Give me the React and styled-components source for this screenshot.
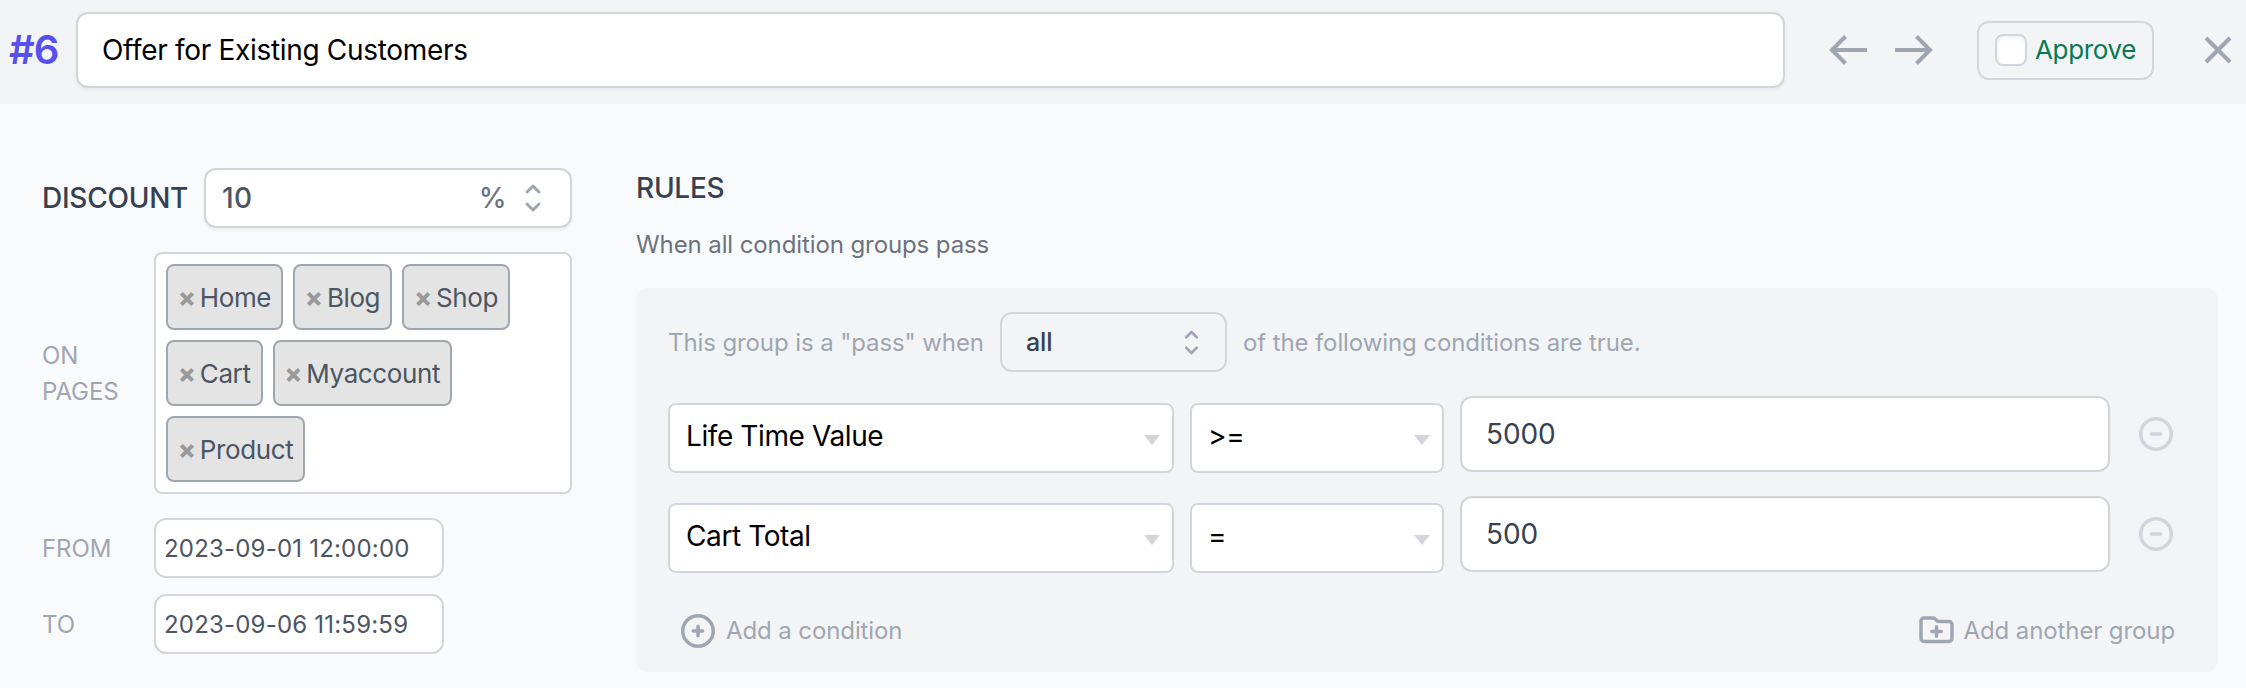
import React from 'react'
import styled, { createGlobalStyle } from 'styled-components'

const GlobalStyle = createGlobalStyle`
    * {
        box-sizing: border-box;
    }
    body {
        margin: 0;
        background-color: #f9fafc;
        font-family: Inter, "Liberation Sans", sans-serif;
        font-size: 24px;
        line-height: 36px;
        letter-spacing: -0.1px;
        color: #374151;
    }
    svg {
        display: block;
        flex: none;
    }
`

const Page = styled.div`
    height: 688px;
    overflow: hidden;
`

const Header = styled.div`
    display: flex;
    align-items: center;
    height: 104px;
    padding: 0 14px 4px 9px;
    background-color: #f3f4f6;
`

const OfferId = styled.div`
    width: 67px;
    font-size: 40px;
    font-weight: 600;
    letter-spacing: -1px;
    color: #5850ec;
`

const Title = styled.div`
    display: flex;
    align-items: center;
    width: 1709px;
    height: 76px;
    padding: 0 24px;
    border: 2px solid #d2d6dc;
    border-radius: 12px;
    background-color: #fff;
    box-shadow: 0 2px 4px rgba(0, 0, 0, 0.05);
    font-size: 28px;
    letter-spacing: -0.32px;
    color: #000;
`

const Arrows = styled.div`
    display: flex;
    gap: 26px;
    margin-left: 43px;
    color: #9fa6b2;
`

const Approve = styled.label`
    display: flex;
    align-items: center;
    width: 177px;
    height: 59px;
    margin: 0 auto 0 43px;
    padding-left: 16px;
    border: 2px solid #d2d6dc;
    border-radius: 12px;
    font-size: 26px;
    letter-spacing: -0.35px;
    color: #057a55;
`

const Checkbox = styled.span`
    width: 32px;
    height: 32px;
    margin-right: 8px;
    border: 2px solid #d2d6dc;
    border-radius: 8px;
    background-color: #fff;
    box-shadow: inset 0 2px 4px rgba(0, 0, 0, 0.06);
`

const Close = styled.div`
    color: #9fa6b2;
`

const Body = styled.div`
    display: flex;
    align-items: flex-start;
    padding: 64px 28px 0 42px;
`

const Sidebar = styled.div`
    width: 530px;
    margin-right: 64px;
`

const Discount = styled.div`
    display: flex;
    align-items: center;
    justify-content: space-between;
    margin-bottom: 24px;
`

const Heading = styled.div`
    font-size: 28px;
    font-weight: 500;
    letter-spacing: -0.25px;
    color: #374151;
`

const Amount = styled.div`
    display: flex;
    align-items: center;
    width: 368px;
    height: 60px;
    padding: 0 17px 0 16px;
    border: 2px solid #d2d6dc;
    border-radius: 12px;
    background-color: #fff;
    box-shadow: 0 2px 4px rgba(0, 0, 0, 0.05);
    font-size: 28px;
    font-weight: 500;
    letter-spacing: 0.5px;
    color: #4b5563;
    svg {
        color: #9fa6b2;
    }
`

const Unit = styled.span`
    margin: 0 6px 0 auto;
    font-size: 28px;
    color: #6b7280;
`

const Field = styled.div`
    display: flex;
    align-items: center;
    margin-bottom: ${props => props.$gap || 16}px;
`

const Label = styled.div`
    width: 112px;
    padding: 2px 20px 0 0;
    color: #9fa6b2;
`

const TagBox = styled.div`
    display: flex;
    flex-wrap: wrap;
    align-content: flex-start;
    gap: 10px;
    width: 418px;
    height: 242px;
    padding: 10px;
    border: 2px solid #d2d6dc;
    border-radius: 8px;
    background-color: #fff;
`

const Tag = styled.div`
    display: flex;
    align-items: center;
    height: 66px;
    padding: 2px 10px 0;
    border: 2px solid #9fa6b2;
    border-radius: 8px;
    background-color: #e4e4e4;
    font-size: 26px;
    letter-spacing: -0.4px;
    color: #4b5563;
`

const Remove = styled.span`
    margin-right: 4px;
    font-weight: 800;
    letter-spacing: 0;
    color: #999;
`

const DateInput = styled.div`
    display: flex;
    align-items: center;
    width: 290px;
    height: 60px;
    padding: 2px 0 0 8px;
    border: 2px solid #d2d6dc;
    border-radius: 12px;
    background-color: #fff;
    letter-spacing: 0.2px;
    color: #4b5563;
`

const Rules = styled.div`
    flex: 1;
    padding-top: 2px;
`

const Hint = styled.div`
    margin: 21px 0 25px;
    color: #6b7280;
`

const Group = styled.div`
    height: 384px;
    padding: 24px 43px 0 32px;
    border-radius: 12px;
    background-color: #f3f4f6;
    color: #9fa6b2;
`

const GroupHead = styled.div`
    display: flex;
    align-items: center;
    margin-bottom: 24px;
`

const Phrase = styled.span`
    padding-top: 2px;
`

const MatchSelect = styled.div`
    display: flex;
    align-items: center;
    justify-content: space-between;
    width: 227px;
    height: 60px;
    margin: 0 16px;
    padding: 0 16px 0 24px;
    border: 2px solid #d2d6dc;
    border-radius: 12px;
    font-size: 25px;
    font-weight: 500;
    color: #374151;
    svg {
        color: #9fa6b2;
    }
`

const Condition = styled.div`
    display: flex;
    align-items: flex-start;
    gap: 16px;
    height: 76px;
    margin-bottom: 24px;
`

const Select = styled.div`
    display: flex;
    align-items: center;
    justify-content: space-between;
    width: ${props => props.$width}px;
    height: 70px;
    margin-top: 7px;
    padding: 0 12px 4px 16px;
    border: 2px solid #d2d6dc;
    border-radius: 8px;
    background-color: #fff;
    font-size: 28px;
    letter-spacing: -0.4px;
    color: #000;
`

const Caret = styled.i`
    margin-top: 8px;
    border: 8px solid transparent;
    border-top: 10px solid #d2d6dc;
    border-bottom: 0;
`

const Value = styled.div`
    display: flex;
    align-items: center;
    width: 650px;
    height: 76px;
    padding-left: 24px;
    border: 2px solid #d2d6dc;
    border-radius: 12px;
    background-color: #fff;
    font-size: 28px;
    color: #374151;
`

const Minus = styled.div`
    align-self: center;
    margin-left: 12px;
    color: #d2d6dc;
`

const Actions = styled.div`
    display: flex;
    justify-content: space-between;
    padding: 16px 0 0 12px;
`

const Action = styled.div`
    display: flex;
    align-items: center;
    gap: 10px;
`

const ArrowIcon = ({ flip }) => (
    <svg width="40" height="40" viewBox="0 0 40 40" fill="none" stroke="currentColor" strokeWidth="4" transform={flip ? 'scale(-1 1)' : undefined}>
        <path d="M39 20H4M17.5 6.5L4 20L17.5 33.5" />
    </svg>
)

const Selector = ({ size }) => (
    <svg width={size} height={size} viewBox="0 0 20 20" fill="none" stroke="currentColor" strokeWidth="1.5" strokeLinecap="round" strokeLinejoin="round">
        <path d="M7 7l3-3 3 3m0 6l-3 3-3-3" />
    </svg>
)

const CircleIcon = ({ plus }) => (
    <svg width="36" height="36" viewBox="0 0 36 36" fill="none" stroke="currentColor" strokeWidth="3.5" strokeLinecap="round">
        <circle cx="18" cy="18" r="15.25" />
        <path d={plus ? 'M13.25 18h9.5M18 13.25v9.5' : 'M13.25 18h9.5'} />
    </svg>
)

const FolderIcon = () => (
    <svg width="36" height="38" viewBox="1 0 36 38" fill="none" stroke="currentColor" strokeWidth="3.5" strokeLinecap="round" strokeLinejoin="round">
        <path d="M4 9a3 3 0 0 1 3-3h10l4 3.500h11a3 3 0 0 1 3 3v14a3 3 0 0 1-3 3H7a3 3 0 0 1-3-3z" />
        <path d="M14.750 19.500h9.500M19.500 14.750v9.500" />
    </svg>
)

const pages = ['Home', 'Blog', 'Shop', 'Cart', 'Myaccount', 'Product']

const conditions = [
    { field: 'Life Time Value', operator: '>=', value: '5000' },
    { field: 'Cart Total', operator: '=', value: '500' },
]

const App = () => {
    return (
        <Page>
            <GlobalStyle />
            <Header>
                <OfferId>#6</OfferId>
                <Title>Offer for Existing Customers</Title>
                <Arrows>
                    <ArrowIcon />
                    <ArrowIcon flip />
                </Arrows>
                <Approve><Checkbox />Approve</Approve>
                <Close>
                    <svg width="28" height="28" viewBox="0 0 28 28" fill="none" stroke="currentColor" strokeWidth="4">
                        <path d="M2 2l24 24M26 2L2 26" />
                    </svg>
                </Close>
            </Header>
            <Body>
                <Sidebar>
                    <Discount>
                        <Heading>DISCOUNT</Heading>
                        <Amount>10<Unit>%</Unit><Selector size={40} /></Amount>
                    </Discount>
                    <Field $gap={24}>
                        <Label>ON PAGES</Label>
                        <TagBox>
                            {pages.map(page => (
                                <Tag key={page}><Remove>×</Remove>{page}</Tag>
                            ))}
                        </TagBox>
                    </Field>
                    <Field>
                        <Label>FROM</Label>
                        <DateInput>2023-09-01 12:00:00</DateInput>
                    </Field>
                    <Field>
                        <Label>TO</Label>
                        <DateInput>2023-09-06 11:59:59</DateInput>
                    </Field>
                </Sidebar>
                <Rules>
                    <Heading>RULES</Heading>
                    <Hint>When all condition groups pass</Hint>
                    <Group>
                        <GroupHead>
                            <Phrase>This group is a "pass" when</Phrase>
                            <MatchSelect>all<Selector size={35} /></MatchSelect>
                            <Phrase>of the following conditions are true.</Phrase>
                        </GroupHead>
                        {conditions.map(condition => (
                            <Condition key={condition.field}>
                                <Select $width={506}>{condition.field}<Caret /></Select>
                                <Select $width={254}>{condition.operator}<Caret /></Select>
                                <Value>{condition.value}</Value>
                                <Minus><CircleIcon /></Minus>
                            </Condition>
                        ))}
                        <Actions>
                            <Action><CircleIcon plus />Add a condition</Action>
                            <Action><FolderIcon />Add another group</Action>
                        </Actions>
                    </Group>
                </Rules>
            </Body>
        </Page>
    )
}

export default App
